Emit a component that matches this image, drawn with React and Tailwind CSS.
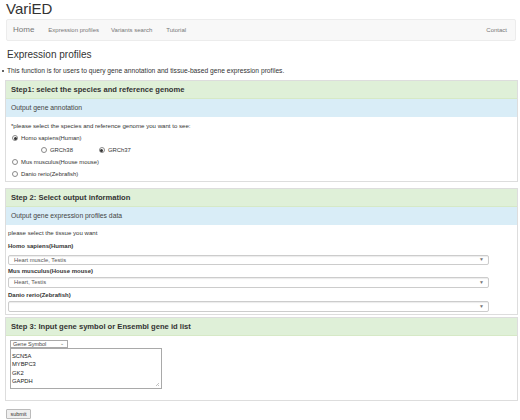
import React from "react";

function Radio({ checked }) {
  return (
    <span className="flex h-[6px] w-[6px] items-center justify-center rounded-full border border-[#8a8a8a] bg-white">
      {checked && <span className="h-[3px] w-[3px] rounded-full bg-[#333]" />}
    </span>
  );
}

function SelectBox({ value }) {
  return (
    <div className="flex h-full w-[481px] items-center justify-between rounded-[2px] border border-[#ccc] bg-white pl-[5px] pr-[4px] text-[5.8px] text-[#555] shadow-[inset_0_1px_1px_rgba(0,0,0,0.08)]">
      <span>{value}</span>
      <span className="text-[5px] text-[#777]">▼</span>
    </div>
  );
}

function GreenHead({ children }) {
  return (
    <div className="flex h-[18px] items-center border-b border-[#d6e9c6] bg-[#dff0d8] pl-[5px] text-[7.6px] font-bold text-[#333]">
      {children}
    </div>
  );
}

function BlueHead({ children }) {
  return (
    <div className="flex h-[18px] items-center bg-[#d9edf7] pl-[5px] text-[6.8px] text-[#444]">
      {children}
    </div>
  );
}

export default function App() {
  return (
    <div className="h-[420px] w-[520px] overflow-hidden bg-white font-['Liberation_Sans',Arial,sans-serif] text-[#333]">
      <div className="h-[18px] pl-[6px] text-[15px] leading-[18px] text-[#333]">VariED</div>

      <nav className="ml-[6px] mt-[1px] flex h-[22px] w-[510px] items-center rounded-[2px] border border-[#ececec] bg-[#f8f8f8] text-[#777]">
        <span className="ml-[6px] text-[8px]">Home</span>
        <span className="ml-[14px] text-[6px]">Expression profiles</span>
        <span className="ml-[12px] text-[6px]">Variants search</span>
        <span className="ml-[14px] text-[6px]">Tutorial</span>
        <span className="ml-auto mr-[8px] text-[6px]">Contact</span>
      </nav>

      <h1 className="mt-[4px] h-[20px] pl-[7px] text-[10px] leading-[20px] font-normal">Expression profiles</h1>
      <ul className="mt-[1px] h-[10px] text-[6.7px] leading-[10px]">
        <li className="flex items-center">
          <span className="ml-[2px] mr-[3px] h-[2px] w-[2px] rounded-full bg-[#333]" />
          This function is for users to query gene annotation and tissue-based gene expression profiles.
        </li>
      </ul>

      <section className="ml-[5px] mt-[4px] w-[513px] border border-[#ddd]">
        <GreenHead>Step1: select the species and reference genome</GreenHead>
        <BlueHead>Output gene annotation</BlueHead>
        <div className="pb-[1px] pl-[5px] pt-[3px] text-[5.9px]">
          <div className="flex h-[12px] items-center text-[6.1px]">*please select the species and reference genome you want to see:</div>
          <div className="flex h-[12px] items-center gap-[3px] pl-[1px]">
            <Radio checked />
            <span>Homo sapiens(Human)</span>
          </div>
          <div className="flex h-[12px] items-center pl-[30px]">
            <Radio />
            <span className="ml-[3px]">GRCh38</span>
            <span className="ml-[26px]">
              <Radio checked />
            </span>
            <span className="ml-[3px]">GRCh37</span>
          </div>
          <div className="flex h-[12px] items-center gap-[3px] pl-[1px]">
            <Radio />
            <span>Mus musculus(House mouse)</span>
          </div>
          <div className="flex h-[12px] items-center gap-[3px] pl-[1px]">
            <Radio />
            <span>Danio rerio(Zebrafish)</span>
          </div>
        </div>
      </section>

      <section className="ml-[5px] mt-[6px] w-[513px] border border-[#ddd]">
        <GreenHead>Step 2: Select output information</GreenHead>
        <BlueHead>Output gene expression profiles data</BlueHead>
        <div className="pb-[2px] pl-[2px] pt-[3px] text-[6.1px]">
          <div className="flex h-[10px] items-center">please select the tissue you want</div>
          <div className="mt-[3px] flex h-[10px] items-center font-bold text-[6px]">Homo sapiens(Human)</div>
          <div className="mt-[4px] h-[10px]">
            <SelectBox value="Heart muscle, Testis" />
          </div>
          <div className="flex h-[12px] items-center font-bold text-[6px]">Mus musculus(House mouse)</div>
          <div className="h-[11px]">
            <SelectBox value="Heart, Testis" />
          </div>
          <div className="mt-[2px] flex h-[10px] items-center font-bold text-[6px]">Danio rerio(Zebrafish)</div>
          <div className="mt-[1px] h-[11px]">
            <SelectBox value="" />
          </div>
        </div>
      </section>

      <section className="ml-[5px] mt-[2px] w-[513px] border border-[#ddd] pb-[11px]">
        <GreenHead>Step 3: Input gene symbol or Ensembl gene id list</GreenHead>
        <div className="ml-[4px] mt-[4px] flex h-[8px] w-[58px] items-center justify-between border border-[#a9a9a9] bg-white pl-[2px] pr-[3px] text-[5.5px] text-[#444]">
          <span>Gene Symbol</span>
          <span className="text-[5px] text-[#666]">⌄</span>
        </div>
        <div className="relative ml-[4px] h-[41px] w-[152px] border border-[#a9a9a9] bg-white pl-[1px] pt-[3px] text-[5.8px] leading-[8.3px] text-[#222]">
          <div>SCN5A</div>
          <div>MYBPC3</div>
          <div>GK2</div>
          <div>GAPDH</div>
          <svg className="absolute bottom-[1px] right-[1px]" width="5" height="5" viewBox="0 0 5 5">
            <path d="M1 4 L4 1 M3 4 L4 3" stroke="#999" strokeWidth="0.6" />
          </svg>
        </div>
      </section>

      <button className="ml-[6px] mt-[8px] flex h-[10px] w-[25px] items-center justify-center rounded-[1px] border border-[#bbb] bg-[#efefef] text-[5.5px] text-[#333]">
        submit
      </button>
    </div>
  );
}
